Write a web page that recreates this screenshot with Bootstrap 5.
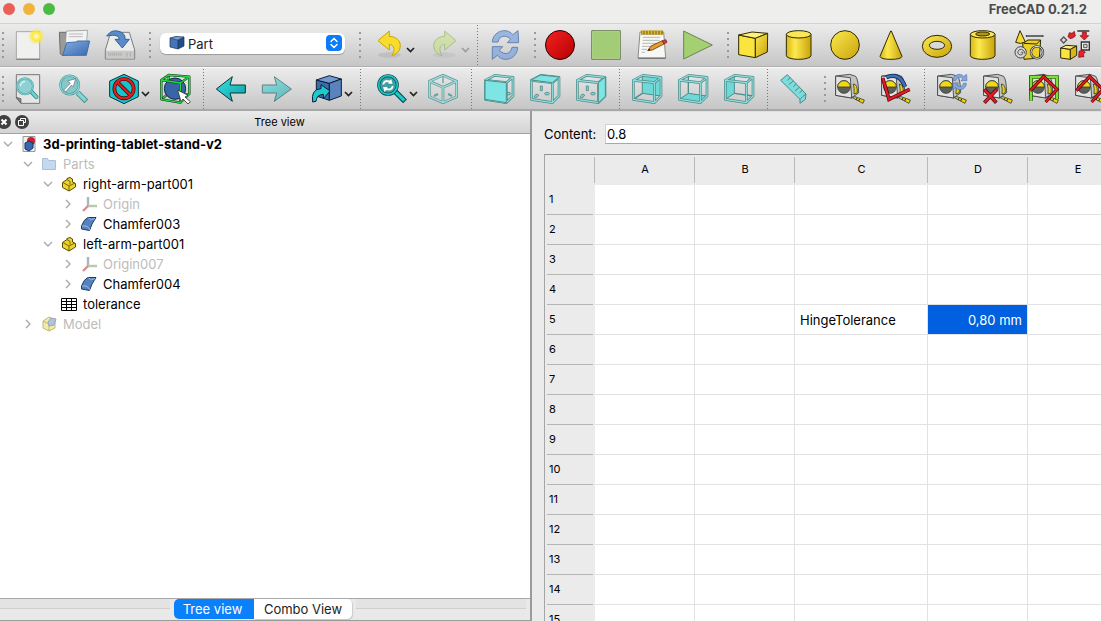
<!DOCTYPE html>
<html lang="en">
<head>
<meta charset="utf-8">
<meta name="viewport" content="width=device-width, initial-scale=1">
<title>FreeCAD 0.21.2</title>
<link rel="stylesheet" href="https://cdn.jsdelivr.net/npm/bootstrap@5.3.0/dist/css/bootstrap.min.css">
<style>
  body { font-family: Inter, "Liberation Sans", sans-serif; font-size: 13px; line-height: 20px; color: #000; background: #ebebeb; }
  svg { display: block; }
  button { border: 0; background: none; padding: 0; color: inherit; }

  .titlebar { height: 23px; background: #eeeeec; padding: 0 14px 5px 3px; }
  .light { width: 12px; height: 12px; border-radius: 50%; }
  .light-close { background: #ec5f56; }
  .light-min { background: #f0b43c; }
  .light-max { background: #4cbb46; }
  .app-title { font-size: 13px; font-weight: 700; color: #4b4b4b; }

  .toolstrip { height: 44px; padding-left: 1px; background: linear-gradient(#ececec, #c6c6c6); border-top: 1px solid #d2d2d0; border-bottom: 1px solid #b0b0b0; }
  .toolstrip + .toolstrip { border-top-color: #fafafa; border-bottom: 2px solid #a8a8a8; }
  .tool { flex: none; width: 46px; padding: 0 8px; }
  .tool svg { width: 30px; height: 30px; overflow: visible; }
  .tool-menu { position: relative; width: 55px; padding: 0 13px 0 12px; }
  .tool-menu .caret { position: absolute; left: 44px; top: 17px; width: 9px; height: 7px; }
  .off { opacity: .55; }
  .soft { opacity: .75; }
  .grip { flex: none; width: 4px; height: 26px; margin-left: 5px; background: repeating-linear-gradient(#999 0 2px, transparent 2px 6px) 1px 0 / 2px 100% no-repeat; }
  .grip:first-child { margin-left: 0; }
  .rule { flex: none; width: 10px; height: 40px; background: repeating-linear-gradient(#777 0 1px, transparent 1px 3px) 5px 0 / 1px 100% no-repeat; }

  .bench { width: 185px; height: 21px; margin: 0 8px 3px; position: relative; }
  .bench select { display: block; width: 100%; height: 21px; border: 0; border-radius: 6px; background: #fff; appearance: none; padding: 0 24px 0 28px; font-size: 13px; line-height: 20px; color: #222; box-shadow: 0 1px 1px #0004; }
  .bench-icon { position: absolute; left: 9px; top: 3px; pointer-events: none; }
  .bench-step { position: absolute; right: 3px; top: 2px; pointer-events: none; }

  .dock { flex: 0 1 532px; min-width: 0; border-right: 2px solid #9b9b9b; }
  .dock-head { height: 23px; background: linear-gradient(#ebebeb, #d3d3d3); border-bottom: 1px solid #a3a3a3; font-size: 11px; }
  .dock-btn { width: 14px; height: 14px; border-radius: 50%; background: #404040; }
  .dock-btn:first-child { margin-left: -3px; }
  .tree { background: #fff; }
  .tree ul { list-style: none; margin: 0; padding: 0; }
  .tree ul ul { padding-left: 20px; }
  .node { display: flex; align-items: center; height: 20px; }
  .twisty { width: 20px; height: 20px; padding-left: 3px; flex: none; }
  .node-icon { width: 18px; height: 16px; margin-right: 5px; flex: none; }
  .dim { color: #bcbcbc; }
  .tabs { height: 23px; border-top: 1px solid #a9a9a9; border-bottom: 1px solid #9b9b9b; padding-right: 4px; background: #e9e9e9; }
  .tabs::before, .tabs::after { content: ""; flex: 1; height: 10px; border-bottom: 1px solid #cfcfcf; background: #e3e3e3; align-self: flex-start; }
  .tabs button { height: 20px; background: #fff; font-size: 13px; line-height: 20px; }
  .tabs .view-tree { width: 80px; margin-left: 4px; border-radius: 5px 0 0 5px; background: #0a80fb; color: #fff; padding-right: 3px; }
  .tabs .view-combo { width: 98px; margin-right: 4px; border-radius: 0 5px 5px 0; color: #222; box-shadow: 1px 1px 1px #0002; }

  .workarea { min-height: 0; }
  .sheet-pane { flex: 1 1 0; min-width: 0; padding: 12px 0 0 12px; border-top: 1px solid #e0e0e0; }
  .content-row { height: 20px; margin-bottom: 10px; }
  .content-row label { width: 61px; flex: none; }
  .content-row input { flex: 1; min-width: 0; height: 20px; border: 1px solid #d0d0d0; border-right: 0; border-bottom-color: #a8a8a8; padding: 0 1px; font-size: 13px; background: #fff; border-radius: 0; }
  .grid-box { border-top: 1px solid #8f8f8f; border-left: 1px solid #a5a5a5; }
  .grid { table-layout: fixed; width: 583px; border-collapse: separate; border-spacing: 0; background: #fff; }
  .grid th { font-size: 11px; font-weight: 400; background: #ebebeb; height: 30px; padding: 0 0 2px; }
  .grid thead th { text-align: center; background: linear-gradient(#b9b9b9, #b9b9b9) right 2px / 1px 26px no-repeat #ebebeb; background-size: 1px 26px; background-position: right 0 top 2px; }
  .grid tbody th { padding-left: 4px; background: linear-gradient(#b5b5b5, #b5b5b5) 2px 29px / 46px 1px no-repeat #ebebeb; }
  .grid td { height: 30px; padding: 0 5px; border-right: 1px solid #e2e2e2; border-bottom: 1px solid #e2e2e2; }
  .grid td.picked { background: #0060df; background-clip: padding-box; color: #fff; text-align: right; }
  .c-head { width: 50px; } .c-std { width: 100px; } .c-wide { width: 133px; }
</style>
</head>
<body class="vh-100 d-flex flex-column overflow-hidden">

<svg width="0" height="0" class="position-absolute" aria-hidden="true">
  <defs>
    <linearGradient id="gold" x1="0" y1="0" x2="1" y2="1"><stop offset="0" stop-color="#fce94f"/><stop offset="1" stop-color="#c9a30a"/></linearGradient>
    <linearGradient id="goldBar"><stop offset="0" stop-color="#d9b614"/><stop offset=".35" stop-color="#fce94f"/><stop offset="1" stop-color="#c9a30a"/></linearGradient>
    <linearGradient id="blue" x1="0" y1="0" x2="1" y2="1"><stop offset="0" stop-color="#84ade0"/><stop offset="1" stop-color="#3a69b0"/></linearGradient>
    <linearGradient id="teal" x1="0" y1="0" x2="1" y2="1"><stop offset="0" stop-color="#3ae3e3"/><stop offset="1" stop-color="#0d9ea2"/></linearGradient>
    <linearGradient id="red" x1="0" y1="0" x2="1" y2="1"><stop offset="0" stop-color="#f52222"/><stop offset="1" stop-color="#b50000"/></linearGradient>
    <radialGradient id="glow"><stop offset="0" stop-color="#fffde0"/><stop offset=".5" stop-color="#fbe93c"/><stop offset="1" stop-color="#fbe93c" stop-opacity="0"/></radialGradient>
    <symbol id="caret" viewBox="0 0 9 7"><path d="M1 1l3.5 3.5L8 1" fill="none" stroke="#222" stroke-width="1.7"/></symbol>
    <symbol id="down" viewBox="0 0 10 20"><path d="M1 8l4 4 4-4" fill="none" stroke="#aaa" stroke-width="1.4"/></symbol>
    <symbol id="side" viewBox="0 0 10 20"><path d="M3 6l4 4-4 4" fill="none" stroke="#aaa" stroke-width="1.4"/></symbol>
    <symbol id="frame" viewBox="0 0 90 90" overflow="visible">
      <g fill="none" stroke-linejoin="round">
        <path d="M4 19L67 26V86L4 76ZM4 19L32 4 87 10 67 26M87 10V66L67 86" stroke="#4f8c8a" stroke-width="8"/>
        <path d="M4 19L67 26V86L4 76ZM4 19L32 4 87 10 67 26M87 10V66L67 86" stroke="#8fe0de" stroke-width="3.5"/>
      </g>
    </symbol>
    <symbol id="ticks" viewBox="0 0 90 90" overflow="visible"><g fill="#7bd5d3" stroke="#4f8c8a" stroke-width="2.5"><path d="M31 36h6v14h-6z"/><ellipse cx="19" cy="66" rx="7" ry="4" transform="rotate(-30 19 66)"/><ellipse cx="51" cy="59" rx="7" ry="4"/></g></symbol>
    <symbol id="tape" viewBox="0 0 90 90" overflow="visible">
      <g stroke="#3a3c3d" stroke-width="2.5" stroke-linejoin="round">
        <path d="M2 6L44 1 62 7Q70 16 71 56L50 72 2 64Z" fill="#c3c5c3"/>
        <path d="M2 6L46 11 50 72 2 64Z" fill="#e2e4e2"/>
        <path d="M55 30Q68 30 67 56L57 60Q59 44 55 30Z" fill="#edd400"/>
        <circle cx="27" cy="39" r="19" fill="#5d5f5b"/>
        <path d="M8 39a19 19 0 0 1 38 0Z" fill="#f2da10"/>
        <path d="M50 70L60 68 88 78 84 88 76 84Z" fill="#edd400"/>
      </g><path d="M66 72l-3 6M74 75l-3 6" stroke="#222" stroke-width="3"/>
    </symbol>
    <symbol id="loop" viewBox="0 0 90 90" overflow="visible"><path d="M7 36C8 4 50-10 68 14L84 2 86 38 52 38 62 27C48 14 28 16 24 36ZM83 52C82 86 42 100 22 76L7 88V50H38L28 61C42 76 62 74 66 52Z" fill="#83a7dd" stroke="#3f67a8" stroke-width="3" stroke-linejoin="round"/></symbol>
    <symbol id="part" viewBox="0 0 18 16"><path d="M2.500 6.500L7 3.500V2.500L10 1.500 12.500 3v3L15.500 7.500V11L9 15 2.500 11.500z" fill="#ecd42c" stroke="#5c4c00"/><path d="M3 6.500l6 3.500 6-3M9 10v5M7 3.500l3 2v3" fill="none" stroke="#5c4c00" stroke-width=".8"/></symbol>
    <symbol id="axes" viewBox="0 0 18 16"><g fill="none" stroke-width="2.400" opacity=".75"><path d="M8 10V1" stroke="#8e9cae"/><path d="M8 10h9" stroke="#9fb996"/><path d="M8 10l-5 5" stroke="#c76d6d"/></g></symbol>
    <symbol id="chamfer" viewBox="0 0 18 16"><path d="M1.500 10Q4 3 8 1.500H16L12 8 9.500 14.500 1.500 13Z" fill="#5583c0" stroke="#1c3a63"/><path d="M2 10Q8 9 10 14M8.500 2Q11 5 15 2.500" fill="none" stroke="#9cbde8"/></symbol>
  </defs>
</svg>

<header class="titlebar d-flex align-items-center">
  <span class="light light-close"></span><span class="light light-min mx-2"></span><span class="light light-max"></span>
  <span class="app-title ms-auto">FreeCAD 0.21.2</span>
</header>

<div class="toolstrip d-flex align-items-center overflow-hidden flex-shrink-0" role="toolbar" aria-label="File, workbench, macro and solids">
  <span class="grip"></span>
  <button class="tool" aria-label="New"><svg viewBox="0 0 90 90"><path d="M10 5H80V87H10Z" fill="#f0f0ef" stroke="#a6a6a6" stroke-width="3"/><path d="M10 88H81" stroke="#777" stroke-width="3"/><circle cx="70" cy="19" r="25" fill="url(#glow)"/></svg></button>
  <button class="tool" aria-label="Open"><svg viewBox="0 0 90 90"><path d="M1 7H22L28 14H80V60L12 77 4 72Z" fill="#9a9a97" stroke="#6e6e6e" stroke-width="3"/><path d="M22 3L86 1 80 60 18 62Z" fill="#f3f3f3" stroke="#8a8a8a" stroke-width="2"/><path d="M30 12h42M29 20h42" stroke="#bbb" stroke-width="3"/><path d="M23 38L50 36 56 33H92L82 76H11Z" fill="url(#blue)" stroke="#3f6faf" stroke-width="3"/></svg></button>
  <button class="tool" aria-label="Save"><svg viewBox="0 0 90 90"><path d="M17 7H73L89 60V87H1V60Z" fill="#ececeb" stroke="#7c7c7c" stroke-width="3" stroke-linejoin="round"/><path d="M3 62H87V85H3Z" fill="#c9c9c7"/><path d="M10 73H52" stroke="#aaa" stroke-width="9" stroke-dasharray="3 3"/><path d="M66 68v12M76 68v12" stroke="#aaa" stroke-width="3"/><path d="M5 18Q20-3 42 4 62 10 60 28H73L52 54 30 28H43Q40 14 22 16 12 17 5 18Z" fill="#5a8bc9" stroke="#34609c" stroke-width="3"/></svg></button>
  <span class="grip"></span>
  <div class="bench">
    <select aria-label="Workbench"><option>Part</option></select>
    <svg class="bench-icon" width="16" height="14" viewBox="0 0 16 14"><path d="M1 2L9 4V13L1 11Z" fill="#4674b5"/><path d="M1 2L7 0 15 1 9 4Z" fill="#7ba3d8"/><path d="M9 4L15 1V10L9 13Z" fill="#234b84"/><path d="M1 2L9 4V13L1 11ZM1 2L7 .5 15 1V10L9 13M9 4L15 1" fill="none" stroke="#17335c" stroke-width=".7"/></svg>
    <svg class="bench-step" width="16" height="16" viewBox="0 0 16 16"><rect width="16" height="16" rx="4" fill="#0a7cfa"/><path d="M5 6.500L8 3.500 11 6.500M5 9.500L8 12.500 11 9.500" fill="none" stroke="#fff" stroke-width="1.500" stroke-linecap="round"/></svg>
  </div>
  <span class="grip"></span>
  <button class="tool tool-menu" aria-label="Undo"><svg viewBox="0 0 90 90"><ellipse cx="46" cy="75" rx="34" ry="8" fill="#999" opacity=".3"/><path d="M12 32L46 3V19C72 20 82 38 78 54Q74 70 54 77 64 60 58 50 54 44 46 43V60Z" fill="#f7dc2c" stroke="#c9a800" stroke-width="3" stroke-linejoin="round"/></svg><svg class="caret"><use href="#caret"/></svg></button>
  <button class="tool tool-menu" aria-label="Redo"><span class="off d-block"><svg viewBox="0 0 90 90"><ellipse cx="46" cy="75" rx="34" ry="8" fill="#999" opacity=".3"/><path d="M81 32L47 3V19C21 20 11 38 15 54Q19 70 39 77 29 60 35 50 39 44 47 43V60Z" fill="#c3e27e" stroke="#84a64a" stroke-width="3" stroke-linejoin="round"/></svg><svg class="caret off"><use href="#caret"/></svg></span></button>
  <span class="rule"></span>
  <button class="tool" aria-label="Refresh"><svg class="soft" viewBox="0 0 90 90"><use href="#loop"/></svg></button>
  <span class="grip"></span>
  <button class="tool" aria-label="Record macro"><svg viewBox="0 0 90 90"><circle cx="45" cy="45" r="43.500" fill="url(#red)" stroke="#2a0000" stroke-width="3"/></svg></button>
  <button class="tool" aria-label="Stop recording"><svg viewBox="0 0 90 90"><path d="M2 2H88V88H2Z" fill="#a3cc76" stroke="#6b8358" stroke-width="3"/><path d="M5 5H85V85H5Z" fill="none" stroke="#badb94" stroke-width="2"/></svg></button>
  <button class="tool" aria-label="Macros"><svg viewBox="0 0 90 90"><path d="M9 6H80L86 84H3Z" fill="#f7f7f5" stroke="#8b8b88" stroke-width="3"/><path d="M3 85H86" stroke="#777" stroke-width="4"/><path d="M12 8H78" stroke="#8a6d10" stroke-width="12"/><path d="M14 7H78" stroke="#e0bd36" stroke-width="13" stroke-dasharray="5 4"/><path d="M18 22H70M17 31H68M16 40H60M15 49H50M14 58H30M14 67H24" stroke="#aaa" stroke-width="2.500"/><path d="M32 62L42 48 76 32 81 42 46 60Z" fill="#e69b2f" stroke="#6b3c08" stroke-width="2.500"/><path d="M76 32L87 29 90 37 81 42Z" fill="#d83b3b" stroke="#7a1414" stroke-width="2"/><path d="M32 62L37 55 40 60Z" fill="#222"/></svg></button>
  <button class="tool" aria-label="Execute macro"><svg viewBox="0 0 90 90"><path d="M2 3L88 45 2 87Z" fill="#a3d070" stroke="#6b8358" stroke-width="3"/></svg></button>
  <span class="grip"></span>
  <button class="tool" aria-label="Cube"><svg viewBox="0 0 90 90"><g stroke="#302b00" stroke-width="3" stroke-linejoin="round"><path d="M2 15L52 25V83L2 74Z" fill="#fbe43e"/><path d="M2 15L42 6 89 10 52 25Z" fill="#fdf07c"/><path d="M89 10L88 66 52 83V25Z" fill="url(#gold)"/></g></svg></button>
  <button class="tool" aria-label="Cylinder"><svg viewBox="0 0 90 90"><g stroke="#302b00" stroke-width="3"><path d="M7 13V77A37 11 0 0 0 81 77V13Z" fill="url(#goldBar)"/><ellipse cx="44" cy="13" rx="37" ry="11" fill="#fbe755"/></g></svg></button>
  <button class="tool" aria-label="Sphere"><svg viewBox="0 0 90 90"><circle cx="45" cy="45" r="43" fill="url(#gold)" stroke="#302b00" stroke-width="3"/></svg></button>
  <button class="tool" aria-label="Cone"><svg viewBox="0 0 90 90"><path d="M44 3L12 79Q14 88 45 88 76 88 78 79L46 3Z" fill="url(#goldBar)" stroke="#302b00" stroke-width="3"/></svg></button>
  <button class="tool" aria-label="Torus"><svg viewBox="0 0 90 90"><path fill-rule="evenodd" d="M1 49A44 33 0 0 1 89 49 44 33 0 0 1 1 49ZM22 46A23 12 0 0 0 68 46 23 12 0 0 0 22 46Z" fill="url(#gold)" stroke="#302b00" stroke-width="3"/></svg></button>
  <button class="tool" aria-label="Tube"><svg viewBox="0 0 90 90"><g stroke="#302b00" stroke-width="3"><path d="M7 13V77A37 11 0 0 0 81 77V13Z" fill="url(#goldBar)"/><ellipse cx="44" cy="13" rx="37" ry="11" fill="#fbe755"/><ellipse cx="44" cy="12" rx="21" ry="6" fill="#b8960c"/></g></svg></button>
  <button class="tool" aria-label="Create primitives"><svg viewBox="0 0 90 90"><g stroke="#302b00" stroke-width="3" stroke-linejoin="round"><path d="M26 40L42 30H80L76 84 30 88Z" fill="#ecd02a"/><path d="M18 2L5 37Q18 44 34 36Z" fill="#f4da38"/><path d="M30 40L68 42 80 30" fill="none"/></g><path d="M38 18H86" stroke="#333" stroke-width="6" stroke-linecap="round"/><path d="M38 18H86" stroke="#ddd" stroke-width="2"/><g fill="none"><circle cx="69" cy="67" r="18" stroke="#333" stroke-width="7"/><circle cx="69" cy="67" r="18" stroke="#ddd" stroke-width="3"/><circle cx="20" cy="67" r="17" fill="#d8d8d6" stroke="#444" stroke-width="3"/><path d="M20 68q4-5 7 0 0 7-8 7-8-2-8-9 3-10 12-8 10 3 9 13" stroke="#444" stroke-width="2.500"/></g></svg></button>
  <button class="tool" aria-label="Shape builder"><svg viewBox="0 0 90 90"><g stroke="#302b00" stroke-width="3" stroke-linejoin="round"><path d="M2 54L31 58V88L2 84Z" fill="#fbe43e"/><path d="M2 54L18 46 50 48 31 58Z" fill="#fdf07c"/><path d="M50 48V76L31 88V58Z" fill="#d9b614"/></g><path d="M11 21L20 30 11 39 2 30Z" fill="#ddd" stroke="#555" stroke-width="4"/><path d="M24 20L28 8 36 10 43 4 46 18 38 24 30 26Z" fill="#e2232e" stroke="#7d0008" stroke-width="2"/><path d="M52 3H88" stroke="#444" stroke-width="5"/><path d="M67 7H79V17H86L73 30 60 17H67Z" fill="#e2232e" stroke="#7d0008" stroke-width="2"/><path d="M64 36H88V60H64Z" fill="#eee" stroke="#333" stroke-width="4"/><path d="M71 43H81V53H71Z" fill="#ddd" stroke="#555" stroke-width="3"/><path d="M57 64L68 60 76 67 70 72 72 80 56 82Z" fill="#e2232e" stroke="#7d0008" stroke-width="2"/></svg></button>
</div>

<div class="toolstrip d-flex align-items-center overflow-hidden flex-shrink-0" role="toolbar" aria-label="View and measure">
  <span class="grip"></span>
  <button class="tool" aria-label="Fit all"><svg viewBox="0 0 90 90"><path d="M10 2H80V88H24L10 72Z" fill="#e6e6e6" stroke="#777" stroke-width="3"/><path d="M10 70L24 74V88Z" fill="#888" stroke="#555" stroke-width="2"/><path d="M55 53L70 69" stroke="#3a8c8e" stroke-width="13" stroke-linecap="round"/><path d="M55 53L70 69" stroke="#6fd0d2" stroke-width="8" stroke-linecap="round"/><circle cx="36" cy="37" r="24" fill="#8fd0d2" stroke="#5a9fa2" stroke-width="6"/><circle cx="36" cy="37" r="24" fill="none" stroke="#7ad8da" stroke-width="3"/><path d="M22 36Q24 24 36 22" fill="none" stroke="#e0f6f6" stroke-width="4"/></svg></button>
  <button class="tool" aria-label="Fit selection"><svg viewBox="0 0 90 90"><path d="M56 56L82 82" stroke="#50908f" stroke-width="16"/><path d="M57 57L80 80" stroke="#84d9d8" stroke-width="10"/><circle cx="32" cy="33" r="28" fill="#86c8c8" stroke="#50908f" stroke-width="7"/><circle cx="32" cy="33" r="28" fill="none" stroke="#84d9d8" stroke-width="4"/><path d="M14 48L34 28 26 21 50 14 43 38 37 34 20 54Z" fill="#fff" stroke="#668" stroke-width="2"/></svg></button>
  <button class="tool tool-menu" aria-label="Draw style"><svg viewBox="0 0 90 90"><path d="M45 1L88 21V68L45 89 2 68V21Z" fill="#16c5cb" stroke="#06373a" stroke-width="3"/><g fill="none"><circle cx="45" cy="44" r="29" stroke="#300" stroke-width="11"/><path d="M25 24L65 64" stroke="#300" stroke-width="11"/><circle cx="45" cy="44" r="29" stroke="#dc2020" stroke-width="7"/><path d="M25 24L65 64" stroke="#dc2020" stroke-width="7"/></g></svg><svg class="caret"><use href="#caret"/></svg></button>
  <button class="tool" aria-label="Bounding box"><svg viewBox="0 0 90 90"><path d="M26 4V58L4 76M26 58L87 62" fill="none" stroke="#0a3d12" stroke-width="7"/><path d="M26 4V58L4 76M26 58L87 62" fill="none" stroke="#27d848" stroke-width="4"/><circle cx="45" cy="44" r="32" fill="#3765a8" stroke="#12294a" stroke-width="3"/><g fill="none" stroke-linejoin="round"><path d="M4 18L61 27V86L4 76ZM4 18L26 3 88 8 61 27M88 8V60L61 86" stroke="#0a3d12" stroke-width="7"/><path d="M4 18L61 27V86L4 76ZM4 18L26 3 88 8 61 27M88 8V60L61 86" stroke="#27d848" stroke-width="4"/></g><path d="M53 48L84 64 75 69 91 83 84 90 69 75 63 83Z" fill="#fff" stroke="#333" stroke-width="2.500"/></svg></button>
  <span class="rule"></span>
  <button class="tool" aria-label="Back"><svg viewBox="0 0 90 90"><path d="M1 45L49 8 42 33H88V57H42L49 82Z" fill="url(#teal)" stroke="#06373a" stroke-width="3" stroke-linejoin="round"/></svg></button>
  <button class="tool" aria-label="Forward"><svg class="off" viewBox="0 0 90 90"><path d="M88 45L37 8 44 33H1V57H44L37 82Z" fill="url(#teal)" stroke="#06373a" stroke-width="3" stroke-linejoin="round"/></svg></button>
  <button class="tool tool-menu" aria-label="Linked object"><svg viewBox="0 0 90 90"><g stroke="#0b1d36" stroke-width="3" stroke-linejoin="round"><path d="M13 18L52 28V79L13 66Z" fill="#3d6cab"/><path d="M13 18L52 5 88 15 52 28Z" fill="#6f9ad2"/><path d="M88 15V66L52 79V28Z" fill="#5a83bd"/><path d="M2 84Q-4 46 27 44V32L54 51 34 74V61Q14 62 12 82Z" fill="#1ccccc"/></g></svg><svg class="caret"><use href="#caret"/></svg></button>
  <span class="rule"></span>
  <button class="tool tool-menu" aria-label="Zoom"><svg viewBox="0 0 90 90"><path d="M56 54L84 82" stroke="#06484a" stroke-width="16"/><path d="M57 55L82 80" stroke="#1ec9cb" stroke-width="10"/><circle cx="33" cy="33" r="28" fill="#35a5a8" stroke="#06484a" stroke-width="9"/><circle cx="33" cy="33" r="28" fill="none" stroke="#1ec9cb" stroke-width="5"/><path d="M15 32Q18 13 38 19L43 14 48 30 31 30 35 26Q25 22 21 33ZM51 35Q48 54 28 49L22 55 17 38 34 38 31 42Q41 46 45 34Z" fill="#fff" stroke="#155" stroke-width="1"/></svg><svg class="caret"><use href="#caret"/></svg></button>
  <button class="tool" aria-label="Isometric"><svg viewBox="0 0 90 90"><g fill="none" stroke-linejoin="round"><path d="M45 4L86 22V68L45 86 4 68V22ZM4 22L45 40 86 22M45 40V86" stroke="#5b9492" stroke-width="8"/><path d="M45 4L86 22V68L45 86 4 68V22ZM4 22L45 40 86 22M45 40V86" stroke="#a4dedc" stroke-width="4"/><path d="M45 8V28" stroke="#68a09e" stroke-width="4"/><path d="M18 66L30 60M72 66L60 60" stroke="#68a09e" stroke-width="6"/></g></svg></button>
  <span class="rule"></span>
  <button class="tool" aria-label="Front"><svg viewBox="0 0 90 90"><use href="#ticks" x="22"/><use href="#frame"/><path d="M3 19L67 26V86L3 76Z" fill="#7de5e3" stroke="#4f8c8a" stroke-width="3"/></svg></button>
  <button class="tool" aria-label="Top"><svg viewBox="0 0 90 90"><use href="#ticks"/><use href="#frame"/><path d="M3 18L32 3 88 9 67 26Z" fill="#7de5e3" stroke="#4f8c8a" stroke-width="3"/></svg></button>
  <button class="tool" aria-label="Right"><svg viewBox="0 0 90 90"><use href="#ticks"/><use href="#frame"/><path d="M67 26L88 9V67L67 87Z" fill="#7de5e3" stroke="#4f8c8a" stroke-width="3"/></svg></button>
  <span class="rule"></span>
  <button class="tool" aria-label="Rear"><svg viewBox="0 0 90 90"><path d="M31 4L87 10V66L31 58Z" fill="#6fd9d7" stroke="#4f8c8a" stroke-width="3"/><path d="M31 58L4 76" stroke="#4f8c8a" stroke-width="4"/><use href="#frame"/></svg></button>
  <button class="tool" aria-label="Bottom"><svg viewBox="0 0 90 90"><path d="M31 4V58" stroke="#4f8c8a" stroke-width="4"/><path d="M4 76L31 58 87 66 67 86Z" fill="#6fd9d7" stroke="#4f8c8a" stroke-width="3"/><use href="#frame"/></svg></button>
  <button class="tool" aria-label="Left"><svg viewBox="0 0 90 90"><path d="M31 4V58L4 76V19Z" fill="#6fd9d7" stroke="#4f8c8a" stroke-width="3"/><path d="M31 58L87 66" stroke="#4f8c8a" stroke-width="4"/><use href="#frame"/></svg></button>
  <span class="rule"></span>
  <button class="tool" aria-label="Measure distance"><svg viewBox="0 0 90 90"><path d="M2 19L22 2 78 60 76 76 60 88 60 76Z" fill="#7fdcdd" stroke="#468b8c" stroke-width="3" stroke-linejoin="round"/><path d="M60 76Q68 66 78 60M31 11L22 19M40 21L26 32M49 30L40 38M58 40L45 51M67 49L58 57" fill="none" stroke="#468b8c" stroke-width="3"/></svg></button>
  <span class="grip"></span>
  <button class="tool" aria-label="Measure linear"><svg viewBox="0 0 90 90"><use href="#tape"/></svg></button>
  <button class="tool" aria-label="Measure angular"><svg viewBox="0 0 90 90"><use href="#tape"/><path d="M16 10Q56-6 72 38" fill="none" stroke="#10254a" stroke-width="13"/><path d="M16 10Q56-6 72 38" fill="none" stroke="#3e70b8" stroke-width="8"/><path d="M5 12L24 76 86 46" fill="none" stroke="#4b0005" stroke-width="11"/><path d="M5 12L24 76 86 46" fill="none" stroke="#de1c28" stroke-width="7"/></svg></button>
  <span class="rule"></span>
  <button class="tool" aria-label="Measure refresh"><svg viewBox="0 0 90 90"><use href="#tape"/><use href="#loop" x="44" y="-2" width="48" height="52"/></svg></button>
  <button class="tool" aria-label="Clear measurements"><svg viewBox="0 0 90 90"><use href="#tape"/><path d="M4 46L40 86M42 46L4 86" stroke="#5b0006" stroke-width="11"/><path d="M5 47L39 85M41 47L5 85" stroke="#dc1e2a" stroke-width="7"/></svg></button>
  <button class="tool" aria-label="Toggle all"><svg viewBox="0 0 90 90"><use href="#tape"/><path d="M6 80V9H84V76" fill="none" stroke="#1d4a08" stroke-width="11"/><path d="M6 80V9H84V76" fill="none" stroke="#7be237" stroke-width="7"/><path d="M4 50L44 8 84 46 50 84" fill="none" stroke="#4b0005" stroke-width="10"/><path d="M4 50L44 8 84 46 50 84" fill="none" stroke="#de1c28" stroke-width="6"/></svg></button>
  <button class="tool" aria-label="Toggle 3D"><svg viewBox="0 0 90 90"><use href="#tape"/><path d="M4 50L44 8 84 46 50 84" fill="none" stroke="#4b0005" stroke-width="10"/><path d="M4 50L44 8 84 46 50 84" fill="none" stroke="#de1c28" stroke-width="6"/></svg></button>
</div>

<main class="workarea d-flex flex-grow-1">
  <aside class="dock d-flex flex-column">
    <div class="dock-head d-flex align-items-center flex-shrink-0">
      <button class="dock-btn" aria-label="Close"><svg width="14" height="14"><path d="M4.500 4.500l5 5m0-5l-5 5" stroke="#fff" stroke-width="2"/></svg></button>
      <button class="dock-btn ms-1" aria-label="Float"><svg width="14" height="14" fill="none" stroke="#fff"><path d="M5.500 5.500v-2h5v4h-2M3.500 5.500h5v5h-5z"/></svg></button>
      <span class="flex-grow-1 text-center">Tree view</span>
    </div>
    <div class="tree flex-grow-1 overflow-hidden">
      <ul>
        <li><div class="node fw-bold"><button class="twisty" aria-label="Collapse"><svg width="10" height="20"><use href="#down"/></svg></button><svg class="node-icon" viewBox="0 0 18 16"><path d="M3 .500h12v15H3z" fill="#eef0f3" stroke="#999"/><circle cx="11" cy="5" r="4" fill="#cf1f2b"/><path d="M5 7l4-2 4 2v5l-4 3-4-2z" fill="#3568ae" stroke="#16335e"/></svg>3d-printing-tablet-stand-v2</div>
          <ul>
            <li><div class="node dim"><button class="twisty" aria-label="Collapse"><svg width="10" height="20"><use href="#down"/></svg></button><svg class="node-icon" viewBox="0 0 18 16"><path d="M2.500 2.500h5l1 2h7v9h-13z" fill="#c5d9ee" stroke="#a9c0da"/></svg>Parts</div>
              <ul>
                <li><div class="node"><button class="twisty" aria-label="Collapse"><svg width="10" height="20"><use href="#down"/></svg></button><svg class="node-icon"><use href="#part"/></svg>right-arm-part001</div>
                  <ul>
                    <li class="node dim"><button class="twisty" aria-label="Expand"><svg width="10" height="20"><use href="#side"/></svg></button><svg class="node-icon"><use href="#axes"/></svg>Origin</li>
                    <li class="node"><button class="twisty" aria-label="Expand"><svg width="10" height="20"><use href="#side"/></svg></button><svg class="node-icon"><use href="#chamfer"/></svg>Chamfer003</li>
                  </ul></li>
                <li><div class="node"><button class="twisty" aria-label="Collapse"><svg width="10" height="20"><use href="#down"/></svg></button><svg class="node-icon"><use href="#part"/></svg>left-arm-part001</div>
                  <ul>
                    <li class="node dim"><button class="twisty" aria-label="Expand"><svg width="10" height="20"><use href="#side"/></svg></button><svg class="node-icon"><use href="#axes"/></svg>Origin007</li>
                    <li class="node"><button class="twisty" aria-label="Expand"><svg width="10" height="20"><use href="#side"/></svg></button><svg class="node-icon"><use href="#chamfer"/></svg>Chamfer004</li>
                  </ul></li>
                <li class="node"><span class="twisty"></span><svg class="node-icon" viewBox="0 0 18 16" fill="none" stroke="#000"><path d="M1.500 2.500h15v12h-15zM1.500 5.500h15M1.500 8.500h15M1.500 11.500h15M6.500 2.500v12M11.500 2.500v12"/></svg>tolerance</li>
              </ul></li>
            <li class="node dim"><button class="twisty" aria-label="Expand"><svg width="10" height="20"><use href="#side"/></svg></button><svg class="node-icon off" viewBox="0 0 18 16"><path d="M3 5l6-4 6 3v8l-6 3-6-3z" fill="#ecdc5a" stroke="#8b7b20"/><path d="M3 5l6 3v7" fill="none" stroke="#8b7b20"/><path d="M8 6l3-4 5 1-2 6-5 1z" fill="#6f92c4" stroke="#3f5f90"/></svg>Model</li>
          </ul></li>
      </ul>
    </div>
    <div class="tabs d-flex justify-content-center flex-shrink-0">
      <button class="view-tree">Tree view</button><button class="view-combo">Combo View</button>
    </div>
  </aside>

  <section class="sheet-pane d-flex flex-column overflow-hidden">
    <div class="content-row d-flex align-items-center flex-shrink-0">
      <label for="content">Content:</label><input id="content" type="text" value="0.8">
    </div>
    <div class="grid-box flex-grow-1 overflow-hidden">
      <table class="grid">
        <colgroup><col class="c-head"><col class="c-std"><col class="c-std"><col class="c-wide"><col class="c-std"><col class="c-std"></colgroup>
        <thead><tr><th></th><th>A</th><th>B</th><th>C</th><th>D</th><th>E</th></tr></thead>
        <tbody>
          <tr><th>1</th><td></td><td></td><td></td><td></td><td></td></tr>
          <tr><th>2</th><td></td><td></td><td></td><td></td><td></td></tr>
          <tr><th>3</th><td></td><td></td><td></td><td></td><td></td></tr>
          <tr><th>4</th><td></td><td></td><td></td><td></td><td></td></tr>
          <tr><th>5</th><td></td><td></td><td>HingeTolerance</td><td class="picked">0,80 mm</td><td></td></tr>
          <tr><th>6</th><td></td><td></td><td></td><td></td><td></td></tr>
          <tr><th>7</th><td></td><td></td><td></td><td></td><td></td></tr>
          <tr><th>8</th><td></td><td></td><td></td><td></td><td></td></tr>
          <tr><th>9</th><td></td><td></td><td></td><td></td><td></td></tr>
          <tr><th>10</th><td></td><td></td><td></td><td></td><td></td></tr>
          <tr><th>11</th><td></td><td></td><td></td><td></td><td></td></tr>
          <tr><th>12</th><td></td><td></td><td></td><td></td><td></td></tr>
          <tr><th>13</th><td></td><td></td><td></td><td></td><td></td></tr>
          <tr><th>14</th><td></td><td></td><td></td><td></td><td></td></tr>
          <tr><th>15</th><td></td><td></td><td></td><td></td><td></td></tr>
        </tbody>
      </table>
    </div>
  </section>
</main>
<script src="https://cdn.jsdelivr.net/npm/bootstrap@5.3.0/dist/js/bootstrap.bundle.min.js"></script>
</body>
</html>
